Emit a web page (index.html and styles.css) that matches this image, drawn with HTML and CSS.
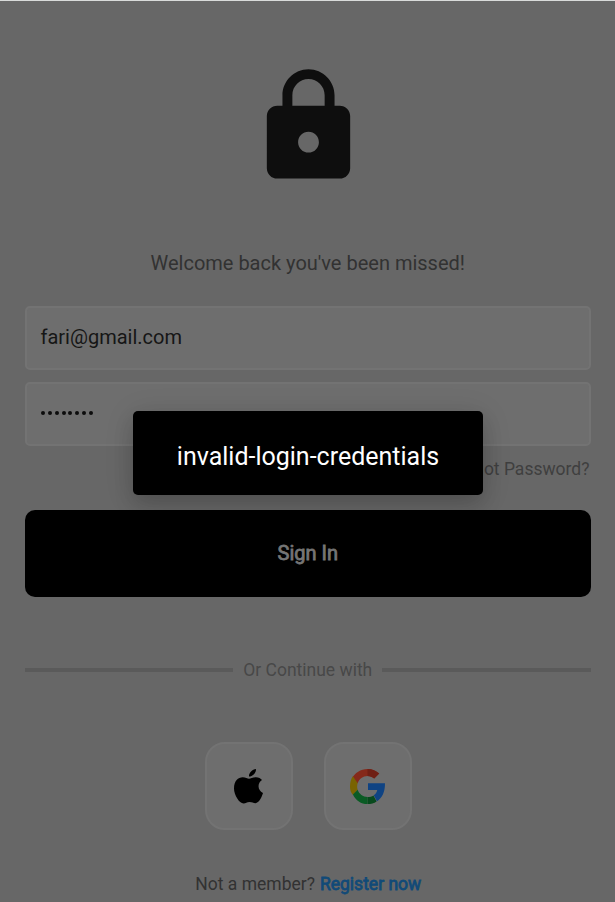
FILE: index.html
```html
<!DOCTYPE html>
<html lang="en">
<head>
<meta charset="utf-8">
<title>Sign In</title>
<link rel="stylesheet" href="styles.css">
</head>
<body>
<main class="page">
  <svg class="lock" viewBox="0 0 24 24"><path fill="#0e0e0e" d="M18 8h-1V6c0-2.760-2.240-5-5-5S7 3.240 7 6v2H6c-1.100 0-2 .9-2 2v10c0 1.100.9 2 2 2h12c1.100 0 2-.9 2-2V10c0-1.100-.9-2-2-2zm-6 9c-1.100 0-2-.9-2-2s.9-2 2-2 2 .9 2 2-.9 2-2 2zm3.100-9H8.900V6c0-1.710 1.390-3.100 3.100-3.100s3.100 1.390 3.100 3.100v2z"/></svg>
  <p class="welcome">Welcome back you've been missed!</p>
  <div class="field">fari@gmail.com</div>
  <div class="field password">
    <i></i><i></i><i></i><i></i><i></i><i></i><i></i><i></i>
  </div>
  <p class="forgot">Forgot Password?</p>
  <div class="signin"><span>Sign In</span></div>
  <div class="divider"><span>Or Continue with</span></div>
  <div class="providers">
    <div class="tile">
      <svg class="apple" viewBox="0 0 29 35"><path d="M22 0c.3 3.600-3.200 7.400-7 7.400C14.800 4 18.200.5 22 0zM15 9.800c1.500 0 3.500-1.600 7-1.600 2.600 0 4.800 1.100 6 2.900-5 3.400-4.500 10.400 1 13-1.200 4-4 10-7.500 10.100-2.300 0-3.200-1.200-6-1.200s-3.700 1.400-5.900 1.500C5.200 34.300 0 26 0 19.500 0 12 4.200 8.300 8.700 8.300c2.800 0 4.800 1.500 6.300 1.500z"/></svg>
    </div>
    <div class="tile">
      <svg class="google" viewBox="0 0 48 48">
        <path fill="#85291a" d="M24 9.500c3.540 0 6.710 1.220 9.210 3.600l6.850-6.850C35.900 2.380 30.470 0 24 0 14.620 0 6.510 5.380 2.560 13.220l7.980 6.190C12.430 13.720 17.740 9.500 24 9.500z"/>
        <path fill="#6f2015" d="M24 0v9.500c3.540 0 6.710 1.220 9.210 3.600l6.850-6.850C35.900 2.380 30.470 0 24 0z"/>
        <path fill="#0f4383" d="M48 19.600H24.700v9.200h12.700c-.5 3-2.200 5.500-4.800 7.200l4.400 8.200C44 40 48 32 48 19.600z"/>
        <path fill="#796300" d="M10.530 28.590c-.48-1.450-.76-2.990-.76-4.590s.27-3.140.76-4.590L4 10C1.200 14 0 19 0 24s1.200 8 4 11.800z"/>
        <path fill="#0a5b24" d="M24 48V38.490c-6.260 0-11.570-4.220-13.470-9.910L4 34.800C8 43 15 48 24 48z"/>
        <path fill="#084a1d" d="M24 48c4.800 0 9-1.200 12.500-3.600L32.160 36.190c-2.150 1.450-4.920 2.300-8.160 2.300z"/>
      </svg>
    </div>
  </div>
  <p class="register"><span>Not a member?</span><b>Register now</b></p>
</main>
<div class="dialog"><span>invalid-login-credentials</span></div>
</body>
</html>
```

FILE: styles.css
```css
* { box-sizing: border-box; }
body {
  margin: 0;
  background: #676767;
  font-family: Roboto, sans-serif;
}
p { margin: 0; white-space: nowrap; }
.page {
  height: 902px;
  padding: 63px 24.500px 0 25px;
  border-top: 1px solid #d9dbda;
  display: flex;
  flex-direction: column;
  overflow: hidden;
}
.lock { width: 125px; height: 125px; margin-left: 1px; align-self: center; flex: none; }
.welcome {
  margin-top: 62px;
  height: 24px;
  line-height: 24px;
  text-align: center;
  font-size: 20px;
  color: #323232;
}
.field {
  flex: none;
  height: 64px;
  margin-top: 31px;
  padding: 0 13.500px 2px;
  display: flex;
  align-items: center;
  background: #6e6e6e;
  border: 2px solid #737373;
  border-radius: 5px;
  font-size: 20px;
  color: #161616;
}
.password { margin-top: 12px; padding: 0 14.300px; gap: 2.750px; }
.password i {
  width: 4px;
  height: 4px;
  margin-top: -2px;
  border-radius: 50%;
  background: #0c0c0c;
}
.forgot {
  margin-top: 12px;
  height: 22px;
  padding-right: 1px;
  line-height: 22px;
  text-align: right;
  font-size: 17.500px;
  color: #3f3f3f;
}
.signin {
  flex: none;
  height: 87px;
  margin-top: 30px;
  padding-bottom: 2px;
  display: flex;
  align-items: center;
  justify-content: center;
  background: #000;
  border-radius: 10px;
  font-size: 20px;
  color: #757575;
  -webkit-text-stroke: 0.800px #757575;
}
.divider {
  margin-top: 61px;
  height: 24px;
  display: flex;
  align-items: center;
  gap: 10px;
  font-size: 17.500px;
  color: #484848;
}
.divider::before, .divider::after {
  content: "";
  flex: 1;
  height: 4px;
  background: #5a5a5a;
}
.providers {
  margin: 60px 0 0 1px;
  display: flex;
  justify-content: center;
  gap: 31px;
}
.tile {
  width: 88px;
  height: 88px;
  display: flex;
  align-items: center;
  justify-content: center;
  background: #6e6e6e;
  border: 2px solid #737373;
  border-radius: 20px;
}
.apple { width: 29px; height: 35px; }
.google { width: 35px; height: 35px; }
.register {
  margin: 42px 0 0 1px;
  height: 24px;
  line-height: 24px;
  display: flex;
  justify-content: center;
  gap: 5px;
  font-size: 17.500px;
  color: #323232;
}
.register b {
  font-weight: 400;
  color: #114a78;
  -webkit-text-stroke: 0.800px #114a78;
}
.dialog {
  position: absolute;
  left: 133px;
  top: 411px;
  width: 350px;
  height: 84px;
  padding-top: 6px;
  display: flex;
  align-items: center;
  justify-content: center;
  background: #000;
  border-radius: 5px;
  box-shadow: 0 11px 20px rgba(0, 0, 0, 0.140), 0 4px 30px rgba(0, 0, 0, 0.120);
  font-size: 25px;
  color: #fff;
  white-space: nowrap;
}
```
